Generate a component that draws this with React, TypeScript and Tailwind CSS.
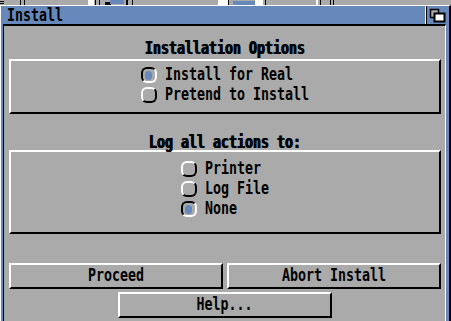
import React from 'react';

const Txt: React.FC<{ children: React.ReactNode; heavy?: boolean }> = ({ children, heavy }) => (
  <span
    className={
      heavy
        ? 'inline-block scale-y-[1.32] whitespace-pre text-[13.3px] leading-none font-bold text-black [text-shadow:1px_0_0_#000]'
        : 'inline-block scale-y-[1.32] whitespace-pre text-[13.3px] leading-none font-bold text-black'
    }
  >
    {children}
  </span>
);

const Radio: React.FC<{ on?: boolean }> = ({ on }) =>
  on ? (
    <div className="w-[16px] h-[16px] rounded-[6px] border-2 border-t-black border-l-black border-b-white border-r-white flex items-center justify-center">
      <div className="w-[7px] h-[9px] rounded-full bg-[#6688bb]" />
    </div>
  ) : (
    <div className="w-[16px] h-[16px] rounded-[6px] border-2 border-t-white border-l-white border-b-black border-r-black" />
  );

const Option: React.FC<{ label: string; on?: boolean }> = ({ label, on }) => (
  <div className="h-[20px] flex items-center gap-[8px]">
    <Radio on={on} />
    <Txt>{label}</Txt>
  </div>
);

const Button: React.FC<{ label: string }> = ({ label }) => (
  <div className="h-[26px] w-[214px] border-2 border-t-white border-l-white border-b-black border-r-black flex items-center justify-center">
    <Txt>{label}</Txt>
  </div>
);

export default function App() {
  return (
    <div className="w-[451px] h-[321px] bg-[#aaaaaa] overflow-hidden font-['DejaVu_Sans_Mono',monospace]">
      {/* bits of the screen behind the window */}
      <svg width="451" height="5" className="block">
        <rect x="0" y="1" width="4" height="1" fill="#000" />
        <rect x="0" y="3" width="4" height="1" fill="#000" />
        <rect x="20" y="0" width="1" height="5" fill="#000" />
        <rect x="24" y="0" width="1" height="5" fill="#000" />
        <rect x="88" y="0" width="6" height="5" fill="#fff" />
        <rect x="95" y="0" width="1" height="5" fill="#000" />
        <rect x="99" y="0" width="1" height="5" fill="#000" />
        <rect x="105" y="2" width="6" height="3" fill="#000" />
        <rect x="110" y="0" width="14" height="4" fill="#6688bb" />
        <rect x="126" y="0" width="2" height="5" fill="#000" />
        <rect x="132" y="0" width="1" height="5" fill="#000" />
        <rect x="218" y="0" width="10" height="5" fill="#fff" />
        <rect x="228" y="0" width="1" height="5" fill="#000" />
        <rect x="233" y="1" width="22" height="4" fill="#6688bb" />
        <rect x="255" y="0" width="8" height="5" fill="#fff" />
        <rect x="265" y="0" width="1" height="5" fill="#000" />
        <rect x="316" y="0" width="2" height="5" fill="#fff" />
        <rect x="320" y="0" width="1" height="5" fill="#000" />
        <rect x="330" y="0" width="1" height="5" fill="#000" />
        <rect x="333" y="0" width="1" height="5" fill="#000" />
      </svg>

      {/* window */}
      <div className="h-[316px] flex flex-col bg-[#6688bb] border-t border-l border-white border-r-2 border-r-black">
        {/* title bar */}
        <div className="h-[18px] flex items-center">
          <div className="flex-1 pl-[6px]">
            <Txt>Install</Txt>
          </div>
          <div className="w-[1px] h-full bg-white" />
          <div className="w-[1px] h-full bg-black" />
          <svg width="22" height="18" className="block">
            <rect x="3.5" y="3.5" width="8" height="8" fill="#aaaaaa" stroke="#000" strokeWidth="1.5" />
            <rect x="7.5" y="7.5" width="10" height="8" fill="#fff" stroke="#000" strokeWidth="2" />
          </svg>
        </div>

        {/* body */}
        <div className="flex-1 ml-[2px] mr-[3px] bg-[#aaaaaa] border-l border-t-2 border-l-black border-t-black border-r border-r-white flex flex-col">
          <div className="mt-[13px] h-[20px] flex items-center justify-center">
            <Txt heavy>Installation Options</Txt>
          </div>
          <div className="ml-[5px] mr-[4px] border-2 border-t-white border-l-white border-b-black border-r-black pt-[4px] pb-[7px] flex justify-center">
            <div className="flex flex-col">
              <Option label="Install for Real" on />
              <Option label="Pretend to Install" />
            </div>
          </div>

          <div className="mt-[22px] h-[14px] flex items-center justify-center">
            <Txt heavy>Log all actions to:</Txt>
          </div>
          <div className="ml-[5px] mr-[4px] border-2 border-t-white border-l-white border-b-black border-r-black pt-[7px] pb-[13px] flex justify-center">
            <div className="flex flex-col">
              <Option label="Printer" />
              <Option label="Log File" />
              <Option label="None" on />
            </div>
          </div>

          <div className="mt-[29px] ml-[5px] flex gap-[4px]">
            <Button label="Proceed" />
            <Button label="Abort Install" />
          </div>
          <div className="mt-[3px] flex justify-center">
            <Button label="Help..." />
          </div>
        </div>
      </div>
    </div>
  );
}
